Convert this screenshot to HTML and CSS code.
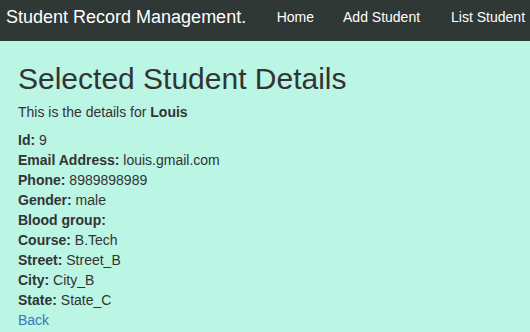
FILE: index.html
```html
<!DOCTYPE html>
<html>
<head>
<meta charset="utf-8">
<link rel="stylesheet" href="styles.css">
</head>
<body>
<nav class="navbar">
  <span class="brand">Student Record Management.</span>
  <ul class="nav">
    <li><a href="#">Home</a></li>
    <li><a href="#">Add Student</a></li>
    <li class="last"><a href="#">List Student</a></li>
  </ul>
</nav>
<main class="content">
  <h2 class="title">Selected Student Details</h2>
  <p class="intro">This is the details for <b>Louis</b></p>
  <div class="details">
    <div><b>Id:</b> 9</div>
    <div><b>Email Address:</b> louis.gmail.com</div>
    <div><b>Phone:</b> 8989898989</div>
    <div><b>Gender:</b> male</div>
    <div><b>Blood group:</b> </div>
    <div><b>Course:</b> B.Tech</div>
    <div><b>Street:</b> Street_B</div>
    <div><b>City:</b> City_B</div>
    <div><b>State:</b> State_C</div>
    <div><a class="back" href="#">Back</a></div>
  </div>
</main>
</body>
</html>
```
FILE: styles.css
```css
html, body {
  margin: 0;
  padding: 0;
}
body {
  background: #bbf5e4;
  font-family: "Liberation Sans", Arial, sans-serif;
  font-size: 14px;
  line-height: 20px;
  color: #333;
  overflow: hidden;
}
.navbar {
  display: flex;
  align-items: center;
  box-sizing: border-box;
  height: 41px;
  padding-bottom: 8px;
  background: #2f3835;
  white-space: nowrap;
}
.brand {
  font-size: 18px;
  color: #fff;
  padding-left: 6px;
  margin-right: 16px;
}
.nav {
  display: flex;
  list-style: none;
  margin: 0;
  padding: 0;
}
.nav li a {
  display: block;
  color: #fff;
  text-decoration: none;
  padding: 0 14.5px;
}
.nav li.last {
  margin-left: 2px;
}
.content {
  padding: 0 18px;
}
.title {
  font-size: 30px;
  font-weight: 500;
  line-height: 33px;
  margin: 21px 0 7px;
}
.intro {
  margin: 0 0 8px;
}
.back {
  color: #337ab7;
  text-decoration: none;
}
```
